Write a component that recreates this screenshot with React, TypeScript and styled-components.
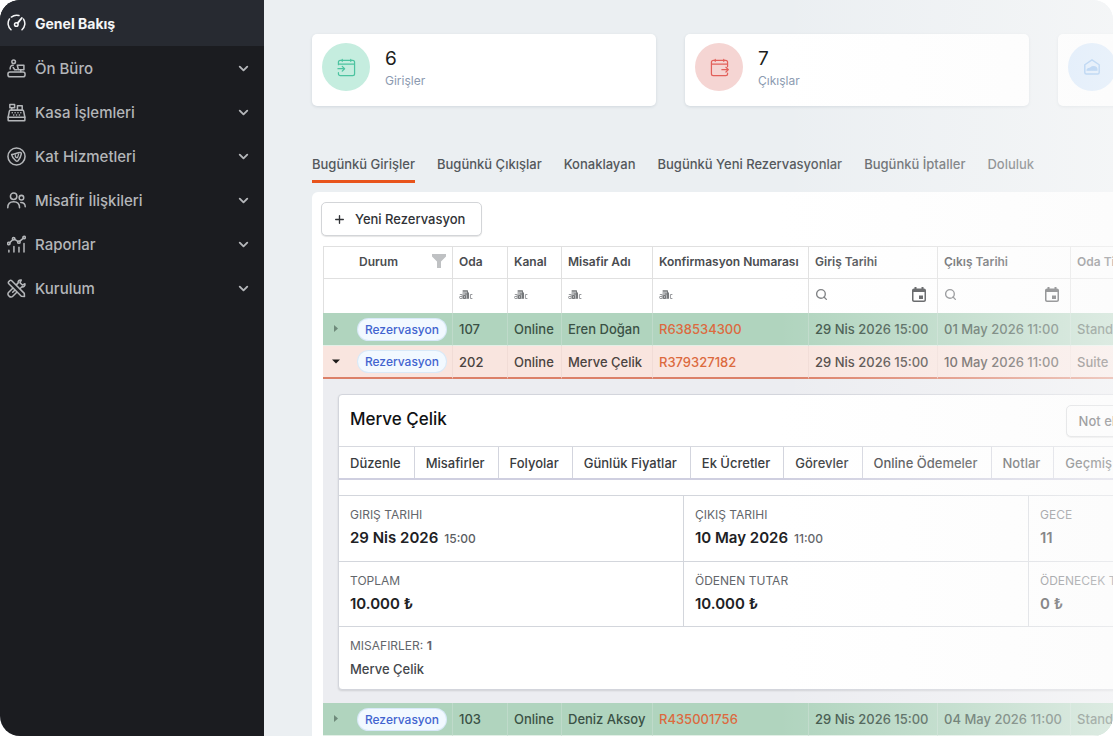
import React from "react";
import styled, { createGlobalStyle, css } from "styled-components";
import { ChevronDown, Plus, Search } from "lucide-react";

const GlobalStyle = createGlobalStyle`
  *, *::before, *::after { box-sizing: border-box; }
  body {
    margin: 0;
    background: #ffffff;
    font-family: Inter, "Liberation Sans", sans-serif;
    font-size: 14px;
    color: #303236;
  }
  button, input { font: inherit; color: inherit; }
  a { text-decoration: none; }
`;

const Frame = styled.div`
  position: relative;
  display: flex;
  min-height: 100vh;
  border-radius: 20px;
  overflow: hidden;
  background: #ebeff2;
`;

const Fade = styled.div`
  position: absolute;
  inset: 0;
  pointer-events: none;
  background: linear-gradient(
    90deg,
    rgba(250, 250, 250, 0) 70%,
    rgba(250, 250, 250, 0.3) 86%,
    rgba(250, 250, 250, 0.6) 100%
  );
`;

const Sidebar = styled.nav`
  flex: 0 0 264px;
  background: #1b1c20;
`;

const SideItem = styled.button<{ $active?: boolean }>`
  display: flex;
  align-items: center;
  gap: 9px;
  width: 100%;
  height: ${(p) => (p.$active ? 46 : 44)}px;
  padding: 0 13px 0 7px;
  border: 0;
  background: ${(p) => (p.$active ? "#272a31" : "transparent")};
  color: ${(p) => (p.$active ? "#f4f5f6" : "#b4b6b9")};
  font-size: ${(p) => (p.$active ? 14 : 15)}px;
  font-weight: ${(p) => (p.$active ? 700 : 500)};
  text-align: left;
  cursor: pointer;
`;

const SideLabel = styled.span`
  flex: 1;
`;

const Main = styled.main`
  flex: 1;
  min-width: 0;
  padding: 34px 0 0 48px;
  overflow: hidden;
`;

const Cards = styled.div`
  display: flex;
  gap: 29px;
`;

const Card = styled.section`
  flex: 0 0 344px;
  display: flex;
  gap: 15px;
  height: 72px;
  padding: 9px 10px;
  border-radius: 5px;
  background: #ffffff;
  box-shadow: 0 1px 3px rgba(60, 80, 100, 0.14);
`;

const CardIcon = styled.div<{ $bg: string; $fg: string }>`
  display: grid;
  place-items: center;
  width: 48px;
  height: 48px;
  border-radius: 50%;
  background: ${(p) => p.$bg};
  color: ${(p) => p.$fg};
`;

const CardText = styled.div`
  padding-top: 4px;
`;

const CardValue = styled.div`
  font-size: 19px;
  line-height: 24px;
  color: #1c1d20;
`;

const CardLabel = styled.div`
  font-size: 12px;
  line-height: 20px;
  color: #8b9ab0;
`;

const Tabs = styled.div`
  display: flex;
  gap: 22px;
  margin: 38px 0 9px;
  white-space: nowrap;
`;

const Tab = styled.button<{ $active?: boolean }>`
  padding: 10px 0 6px;
  border: 0;
  border-bottom: 3px solid ${(p) => (p.$active ? "#e8541c" : "transparent")};
  background: none;
  font-size: 13px;
  font-weight: 500;
  line-height: 20px;
  color: #54585c;
  cursor: pointer;
`;

const Panel = styled.section`
  padding: 10px 0 0 9px;
  border-radius: 6px 0 0 0;
  background: #ffffff;
`;

const outlined = css`
  display: flex;
  align-items: center;
  border: 1px solid #d3d5d8;
  border-radius: 5px;
  background: #ffffff;
  box-shadow: 0 1px 1px rgba(0, 0, 0, 0.1);
  cursor: pointer;
  white-space: nowrap;
`;

const NewButton = styled.button`
  ${outlined}
  gap: 9px;
  height: 34px;
  margin-bottom: 10px;
  padding: 0 16px 0 11px;
  font-size: 13px;
  font-weight: 500;
`;

const Grid = styled.table`
  width: 100%;
  min-width: 848px;
  margin-left: 2px;
  table-layout: fixed;
  border-collapse: separate;
  border-spacing: 0;
  white-space: nowrap;
`;

const Col = styled.col<{ $w?: number }>`
  width: ${(p) => (p.$w ? `${p.$w}px` : "auto")};
`;

const HeadCell = styled.th`
  height: 33px;
  padding: 0 6px 3px;
  border: 1px solid #e0e0e0;
  border-left-width: 0;
  font-size: 12px;
  font-weight: 600;
  text-align: left;
  color: #4a4c50;

  &:first-child {
    border-left-width: 1px;
    padding-left: 35px;
  }
`;

const HeadInner = styled.div`
  display: flex;
  align-items: center;
  justify-content: space-between;
`;

const FilterCell = styled.td`
  height: 34px;
  padding: 0 6px 3px;
  border-right: 1px solid #e0e0e0;

  &:first-child {
    border-left: 1px solid #e0e0e0;
  }
`;

const FilterBox = styled.label`
  display: flex;
  align-items: center;
  color: #77797c;
`;

const FilterInput = styled.input`
  flex: 1;
  width: 0;
  min-width: 0;
  height: 24px;
  padding: 0 4px;
  border: 0;
  outline: 0;
  background: transparent;
`;

const DateButton = styled.button`
  display: grid;
  padding: 0;
  margin-right: 5px;
  border: 0;
  background: none;
  color: #3f4144;
`;

const Row = styled.tr<{ $tone: "green" | "peach" }>`
  background: ${(p) => (p.$tone === "green" ? "#b0d4be" : "#f9e5df")};
  color: ${(p) => (p.$tone === "green" ? "#3a5145" : "#4a4340")};

  & > td {
    border-right: 1px solid ${(p) => (p.$tone === "green" ? "#bfdaca" : "#f1dcd6")};
    border-bottom: ${(p) =>
      p.$tone === "green" ? "1px solid #e2efe6" : "2px solid #dc8068"};
  }
`;

const Cell = styled.td`
  height: 33px;
  padding: 0 6px;
  font-size: 13px;
  font-weight: 500;
`;

const StatusInner = styled.div`
  display: flex;
  align-items: center;
  gap: 15px;
`;

const Expander = styled.button<{ $open?: boolean }>`
  display: grid;
  place-items: center;
  width: 16px;
  height: 16px;
  padding: 0;
  border: 0;
  background: none;
  color: ${(p) => (p.$open ? "#1d1a19" : "#6e8a7a")};
`;

const Badge = styled.span`
  padding: 0 7px;
  border-radius: 11px;
  background: #f2f9ff;
  box-shadow: 0 0 0 1px #d8e9f8;
  font-size: 12px;
  font-weight: 500;
  line-height: 21px;
  color: #4264cf;
`;

const CodeLink = styled.a`
  color: #dc6a3e;
`;

const DetailCell = styled.td`
  padding: 15px 15px 13px;
  background: #ecedf1;
`;

const DetailCard = styled.article`
  border: 1px solid #d3d5dc;
  border-radius: 4px;
  background: #ffffff;
  box-shadow: 0 1px 2px rgba(0, 0, 0, 0.12);
`;

const DetailHead = styled.header`
  display: flex;
  align-items: center;
  justify-content: space-between;
  height: 52px;
  padding: 0 8px 0 11px;
  border-bottom: 1px solid #d7d9df;
`;

const GuestTitle = styled.h2`
  margin: 0;
  padding-bottom: 4px;
  font-size: 17px;
  font-weight: 500;
  line-height: 24px;
  color: #111214;
`;

const NoteButton = styled.button`
  ${outlined}
  height: 32px;
  padding: 0 16px 0 12px;
  font-size: 13px;
  font-weight: 500;
`;

const DetailTabs = styled.div`
  display: flex;
  height: 33px;
  border-bottom: 2px solid #cfcfe0;
`;

const DetailTab = styled.button`
  flex: none;
  padding: 0 13px 0 11px;
  border: 0;
  border-right: 1px solid #d3d5de;
  background: none;
  font-size: 13px;
  font-weight: 500;
  color: #3a3c40;
  cursor: pointer;
`;

const Facts = styled.dl`
  display: grid;
  grid-template-columns: 345px 345px 1fr;
  margin: 15px 0 0;
  border-top: 1px solid #d3d6dc;
`;

const Fact = styled.div`
  padding: 10px 11px;
  border-bottom: 1px solid #d3d6dc;
  border-right: 1px solid #d3d6dc;

  &:nth-child(3n) {
    border-right: 0;
  }
`;

const GuestFact = styled.div`
  grid-column: 1 / -1;
  padding: 10px 11px 8px;
`;

const FactName = styled.dt`
  font-size: 12px;
  line-height: 18px;
  color: #63666b;
`;

const FactValue = styled.dd<{ $plain?: boolean }>`
  margin: 2px 0 0;
  font-size: ${(p) => (p.$plain ? 13 : 15)}px;
  font-weight: ${(p) => (p.$plain ? 500 : 600)};
  line-height: 24px;
  color: ${(p) => (p.$plain ? "#44474b" : "#202124")};
`;

const Time = styled.small`
  margin-left: 6px;
  font-size: 12px;
  font-weight: 500;
  color: #5a5d62;
`;

type IconProps = { size?: number; children: React.ReactNode };

const LineIcon = ({ size = 19, children }: IconProps) => (
  <svg
    width={size}
    height={size}
    viewBox="0 0 20 20"
    fill="none"
    stroke="currentColor"
    strokeWidth="1.6"
    strokeLinecap="round"
    strokeLinejoin="round"
    aria-hidden="true"
  >
    {children}
  </svg>
);

const icons = {
  gauge: (
    <LineIcon>
      <path d="M4.200 16.600A8.800 8.800 0 0 1 2.600 5.200M4.600 3.200A8.800 8.800 0 0 1 12.600 1.600M17.400 5.300a8.800 8.800 0 0 1-1.600 11.300" />
      <circle cx="9.800" cy="11" r="1.900" />
      <path d="M11.200 9.500L15.600 4.200" strokeWidth="2" />
    </LineIcon>
  ),
  desk: (
    <LineIcon>
      <circle cx="7" cy="2.900" r="1.900" />
      <path d="M3.300 10.500c0-2.600 1-4 3.200-4M6.500 9l1.600 2.300h2.600" />
      <path d="M10.800 6.500h7v4.800h-5.800zM14.500 11.500v2" />
      <rect x="1" y="13.700" width="18" height="5" rx="2.200" />
    </LineIcon>
  ),
  register: (
    <LineIcon>
      <path d="M3.600 7.500h12.800c.6 0 1 .4 1.100 1l1.300 6.500H1.200l1.300-6.500c.1-.6.500-1 1.100-1z" />
      <path d="M1.200 15v3.200c0 .4.200.6.600.6h16.400c.4 0 .6-.2.600-.6V15" />
      <path d="M5 7.500V5.200M3 1.500h5v3.500H3zM11 7.500V3h5v4.500" />
      <path d="M5.500 10.200h.1M8.500 10.200h.1M11.500 10.200h.1M14.500 10.200h.1M7 12.600h.1M10 12.600h.1M13 12.600h.1" />
    </LineIcon>
  ),
  housekeeping: (
    <LineIcon>
      <circle cx="10" cy="10" r="9" />
      <path d="M4.900 7.900c3-.2 5.700-1.800 8.800-2.100 1.300-.1 1.500.7 1.300 1.700-.5 2.600-1.300 4.800-3.400 6.900-.7.700-1.600.7-2.300.1-1.900-1.600-3.900-3.700-4.400-6.600z" />
      <path d="M8.800 8.300c-.5 2 .5 3 2.300 2.900l1.100-3.800" strokeWidth="1.300" />
    </LineIcon>
  ),
  people: (
    <LineIcon>
      <circle cx="7" cy="5.600" r="3.400" />
      <circle cx="15.200" cy="7" r="2.400" />
      <path d="M.8 17.500c0-4 2.500-6.300 6.200-6.300s6.200 2.300 6.200 6.300M14.500 12c3 0 4.700 1.700 4.700 4.600" />
    </LineIcon>
  ),
  reports: (
    <LineIcon>
      <circle cx="1.900" cy="9" r="1.300" />
      <circle cx="7" cy="4" r="1.300" />
      <circle cx="12.500" cy="7.500" r="1.300" />
      <circle cx="18" cy="2.600" r="1.300" />
      <path d="M2.900 8L6 5M8.200 4.700l3.100 2M13.500 6.500l3.500-3M2 16v2M7.300 12v6M12.600 13v5M17.900 9v9" />
    </LineIcon>
  ),
  tools: (
    <LineIcon>
      <path d="M5 1.900L18.200 15.100l.2 3.300-3.300-.2L1.900 5c-.7-.7-.7-1.500 0-2.200l.9-.9c.7-.7 1.500-.7 2.200 0z" />
      <path d="M8.200 11.800L6 14M6.100 9.700l-4.300 4.300c-1.100 1.100-1.100 2.600 0 3.600l.7.700c1 1 2.500 1 3.600-.1l4.200-4.200M10 5.900l1.800-1.800c-.4-2 .9-3.300 3.200-3l-1.400 2.700 2.600 2.600 2.700-1.400c.3 2.300-1.200 3.600-3.200 3.200L13.900 10" />
    </LineIcon>
  ),
  checkIn: (
    <LineIcon>
      <path
        d="M1.500 7V4.500c0-1.200.8-2 2-2h13c1.200 0 2 .8 2 2v12c0 1.200-.8 2-2 2h-13c-1.200 0-2-.8-2-2V15.500M1.500 6.500h17M5.500 1.500v2M14.500 1.500v2M1 11.300h6.500M5.500 8.800L8 11.300l-2.500 2.500"
        strokeWidth="1.300"
      />
    </LineIcon>
  ),
  checkOut: (
    <LineIcon>
      <path
        d="M18.500 9V4.500c0-1.200-.8-2-2-2h-13c-1.200 0-2 .8-2 2v12c0 1.200.8 2 2 2h13c1.200 0 2-.8 2-2v-.5M1.500 6.500h17M5.500 1.500v2M14.500 1.500v2M12.500 12.300h6.500M16.800 9.800l2.500 2.500-2.500 2.500"
        strokeWidth="1.300"
      />
    </LineIcon>
  ),
  stay: (
    <LineIcon size={18}>
      <path d="M2 7.500L10 2l8 5.500V16c0 1-.6 1.700-1.700 1.700H3.700C2.600 17.700 2 17 2 16z" />
      <path
        d="M4.500 13.500h11c0-2.500-1.500-3.800-4-3.800-2 0-2.500 1-3.500 1.600-1.500.5-3 .4-3.500 2.200z"
        fill="currentColor"
      />
    </LineIcon>
  ),
};

const FunnelIcon = () => (
  <svg width="14" height="14" viewBox="0 0 14 14" fill="#bfc1c3" aria-hidden="true">
    <path d="M0 0h14v2.500L9 7.500V14H5V7.500L0 2.500z" />
  </svg>
);

const ContainsIcon = () => (
  <svg width="14" height="10" viewBox="0 0 14 10" fill="none" aria-hidden="true">
    <path d="M3.500 0H9v2h1v7H3.500z" fill="#b4b6b8" />
    <path d="M.8 4.500h2.400v4H1c-1-.6-1-1.800 0-2h2M13.400 4.500h-2v4h2" stroke="#97999c" />
    <path d="M4 1h4.500v7.500M6 4h2.500M4.500 5.500h2v3h-2zM9.500 3v5.500" stroke="#76787b" />
  </svg>
);

const CalendarIcon = () => (
  <svg width="14" height="15" viewBox="0 0 14 15" aria-hidden="true">
    <path
      d="M2.500 0h2v1.500h5V0h2v1.500h.5c1.100 0 2 .9 2 2V13c0 1.100-.9 2-2 2H2c-1.100 0-2-.9-2-2V3.500c0-1.100.9-2 2-2h.5zM1.500 5v8c0 .3.200.5.500.5h10c.3 0 .5-.2.500-.5V5z"
      fill="currentColor"
      fillRule="evenodd"
    />
    <path d="M7 8.500h4V12H7z" fill="currentColor" />
  </svg>
);

const Triangle = ({ open }: { open?: boolean }) => (
  <svg width="8" height="8" viewBox="0 0 8 8" fill="currentColor" aria-hidden="true">
    <path d={open ? "M0 1.500h8L4 5.500z" : "M2 0v7L6 3.500z"} />
  </svg>
);

const menu = [
  { label: "Genel Bakış", icon: icons.gauge, active: true },
  { label: "Ön Büro", icon: icons.desk },
  { label: "Kasa İşlemleri", icon: icons.register },
  { label: "Kat Hizmetleri", icon: icons.housekeeping },
  { label: "Misafir İlişkileri", icon: icons.people },
  { label: "Raporlar", icon: icons.reports },
  { label: "Kurulum", icon: icons.tools },
];

const cards = [
  { value: "6", label: "Girişler", icon: icons.checkIn, bg: "#c5eddf", fg: "#4cc3a0" },
  { value: "7", label: "Çıkışlar", icon: icons.checkOut, bg: "#f5d5d3", fg: "#e2605a" },
  { icon: icons.stay, bg: "#cfe4fb", fg: "#7ab0ec" },
];

const tabs = [
  "Bugünkü Girişler",
  "Bugünkü Çıkışlar",
  "Konaklayan",
  "Bugünkü Yeni Rezervasyonlar",
  "Bugünkü İptaller",
  "Doluluk",
];

const columns = [
  { title: "Oda", width: 55 },
  { title: "Kanal", width: 54 },
  { title: "Misafir Adı", width: 91 },
  { title: "Konfirmasyon Numarası", width: 156 },
  { title: "Giriş Tarihi", width: 129, date: true },
  { title: "Çıkış Tarihi", width: 133, date: true },
];

type Booking = {
  room: string;
  guest: string;
  code: string;
  from: string;
  to: string;
  type: string;
};

const bookings: Booking[] = [
  { room: "107", guest: "Eren Doğan", code: "R638534300", from: "29 Nis 2026 15:00", to: "01 May 2026 11:00", type: "Standart" },
  { room: "202", guest: "Merve Çelik", code: "R379327182", from: "29 Nis 2026 15:00", to: "10 May 2026 11:00", type: "Suite" },
  { room: "103", guest: "Deniz Aksoy", code: "R435001756", from: "29 Nis 2026 15:00", to: "04 May 2026 11:00", type: "Standart" },
];

const detailTabs = [
  "Düzenle",
  "Misafirler",
  "Folyolar",
  "Günlük Fiyatlar",
  "Ek Ücretler",
  "Görevler",
  "Online Ödemeler",
  "Notlar",
  "Geçmiş",
];

const BookingRow = ({ item, open }: { item: Booking; open?: boolean }) => (
  <Row $tone={open ? "peach" : "green"}>
    <Cell>
      <StatusInner>
        <Expander $open={open} aria-expanded={!!open} aria-label={item.guest}>
          <Triangle open={open} />
        </Expander>
        <Badge>Rezervasyon</Badge>
      </StatusInner>
    </Cell>
    <Cell>{item.room}</Cell>
    <Cell>Online</Cell>
    <Cell>{item.guest}</Cell>
    <Cell>
      <CodeLink href="#">{item.code}</CodeLink>
    </Cell>
    <Cell>{item.from}</Cell>
    <Cell>{item.to}</Cell>
    <Cell>{item.type}</Cell>
  </Row>
);

const BookingDetail = () => (
  <DetailCard>
    <DetailHead>
      <GuestTitle>Merve Çelik</GuestTitle>
      <NoteButton>Not ekle</NoteButton>
    </DetailHead>
    <DetailTabs>
      {detailTabs.map((t) => (
        <DetailTab key={t}>{t}</DetailTab>
      ))}
    </DetailTabs>
    <Facts>
      <Fact>
        <FactName>GIRIŞ TARIHI</FactName>
        <FactValue>
          29 Nis 2026<Time>15:00</Time>
        </FactValue>
      </Fact>
      <Fact>
        <FactName>ÇIKIŞ TARIHI</FactName>
        <FactValue>
          10 May 2026<Time>11:00</Time>
        </FactValue>
      </Fact>
      <Fact>
        <FactName>GECE</FactName>
        <FactValue>11</FactValue>
      </Fact>
      <Fact>
        <FactName>TOPLAM</FactName>
        <FactValue>10.000 ₺</FactValue>
      </Fact>
      <Fact>
        <FactName>ÖDENEN TUTAR</FactName>
        <FactValue>10.000 ₺</FactValue>
      </Fact>
      <Fact>
        <FactName>ÖDENECEK TUTAR</FactName>
        <FactValue>0 ₺</FactValue>
      </Fact>
      <GuestFact>
        <FactName>
          MISAFIRLER: <b>1</b>
        </FactName>
        <FactValue $plain>Merve Çelik</FactValue>
      </GuestFact>
    </Facts>
  </DetailCard>
);

export default function App() {
  return (
    <>
      <GlobalStyle />
      <Frame>
        <Sidebar>
          {menu.map((m) => (
            <SideItem key={m.label} $active={m.active}>
              {m.icon}
              <SideLabel>{m.label}</SideLabel>
              {!m.active && <ChevronDown size={15} strokeWidth={3} />}
            </SideItem>
          ))}
        </Sidebar>
        <Main>
          <Cards>
            {cards.map((c) => (
              <Card key={c.bg}>
                <CardIcon $bg={c.bg} $fg={c.fg}>
                  {c.icon}
                </CardIcon>
                {c.label && (
                  <CardText>
                    <CardValue>{c.value}</CardValue>
                    <CardLabel>{c.label}</CardLabel>
                  </CardText>
                )}
              </Card>
            ))}
          </Cards>
          <Tabs>
            {tabs.map((t, i) => (
              <Tab key={t} $active={i === 0}>
                {t}
              </Tab>
            ))}
          </Tabs>
          <Panel>
            <NewButton>
              <Plus size={13} strokeWidth={2.500} />
              Yeni Rezervasyon
            </NewButton>
            <Grid>
              <colgroup>
                <Col $w={130} />
                {columns.map((c) => (
                  <Col key={c.title} $w={c.width} />
                ))}
                <Col />
              </colgroup>
              <thead>
                <tr>
                  <HeadCell scope="col">
                    <HeadInner>
                      Durum
                      <FunnelIcon />
                    </HeadInner>
                  </HeadCell>
                  {columns.map((c) => (
                    <HeadCell key={c.title} scope="col">
                      {c.title}
                    </HeadCell>
                  ))}
                  <HeadCell scope="col">Oda Tipi</HeadCell>
                </tr>
                <tr>
                  <FilterCell />
                  {columns.map((c) => (
                    <FilterCell key={c.title}>
                      <FilterBox>
                        {c.date ? <Search size={13} strokeWidth={2.500} /> : <ContainsIcon />}
                        <FilterInput aria-label={c.title} />
                        {c.date && (
                          <DateButton aria-label={c.title}>
                            <CalendarIcon />
                          </DateButton>
                        )}
                      </FilterBox>
                    </FilterCell>
                  ))}
                  <FilterCell />
                </tr>
              </thead>
              <tbody>
                <BookingRow item={bookings[0]} />
                <BookingRow item={bookings[1]} open />
                <tr>
                  <DetailCell colSpan={8}>
                    <BookingDetail />
                  </DetailCell>
                </tr>
                <BookingRow item={bookings[2]} />
              </tbody>
            </Grid>
          </Panel>
        </Main>
        <Fade />
      </Frame>
    </>
  );
}
